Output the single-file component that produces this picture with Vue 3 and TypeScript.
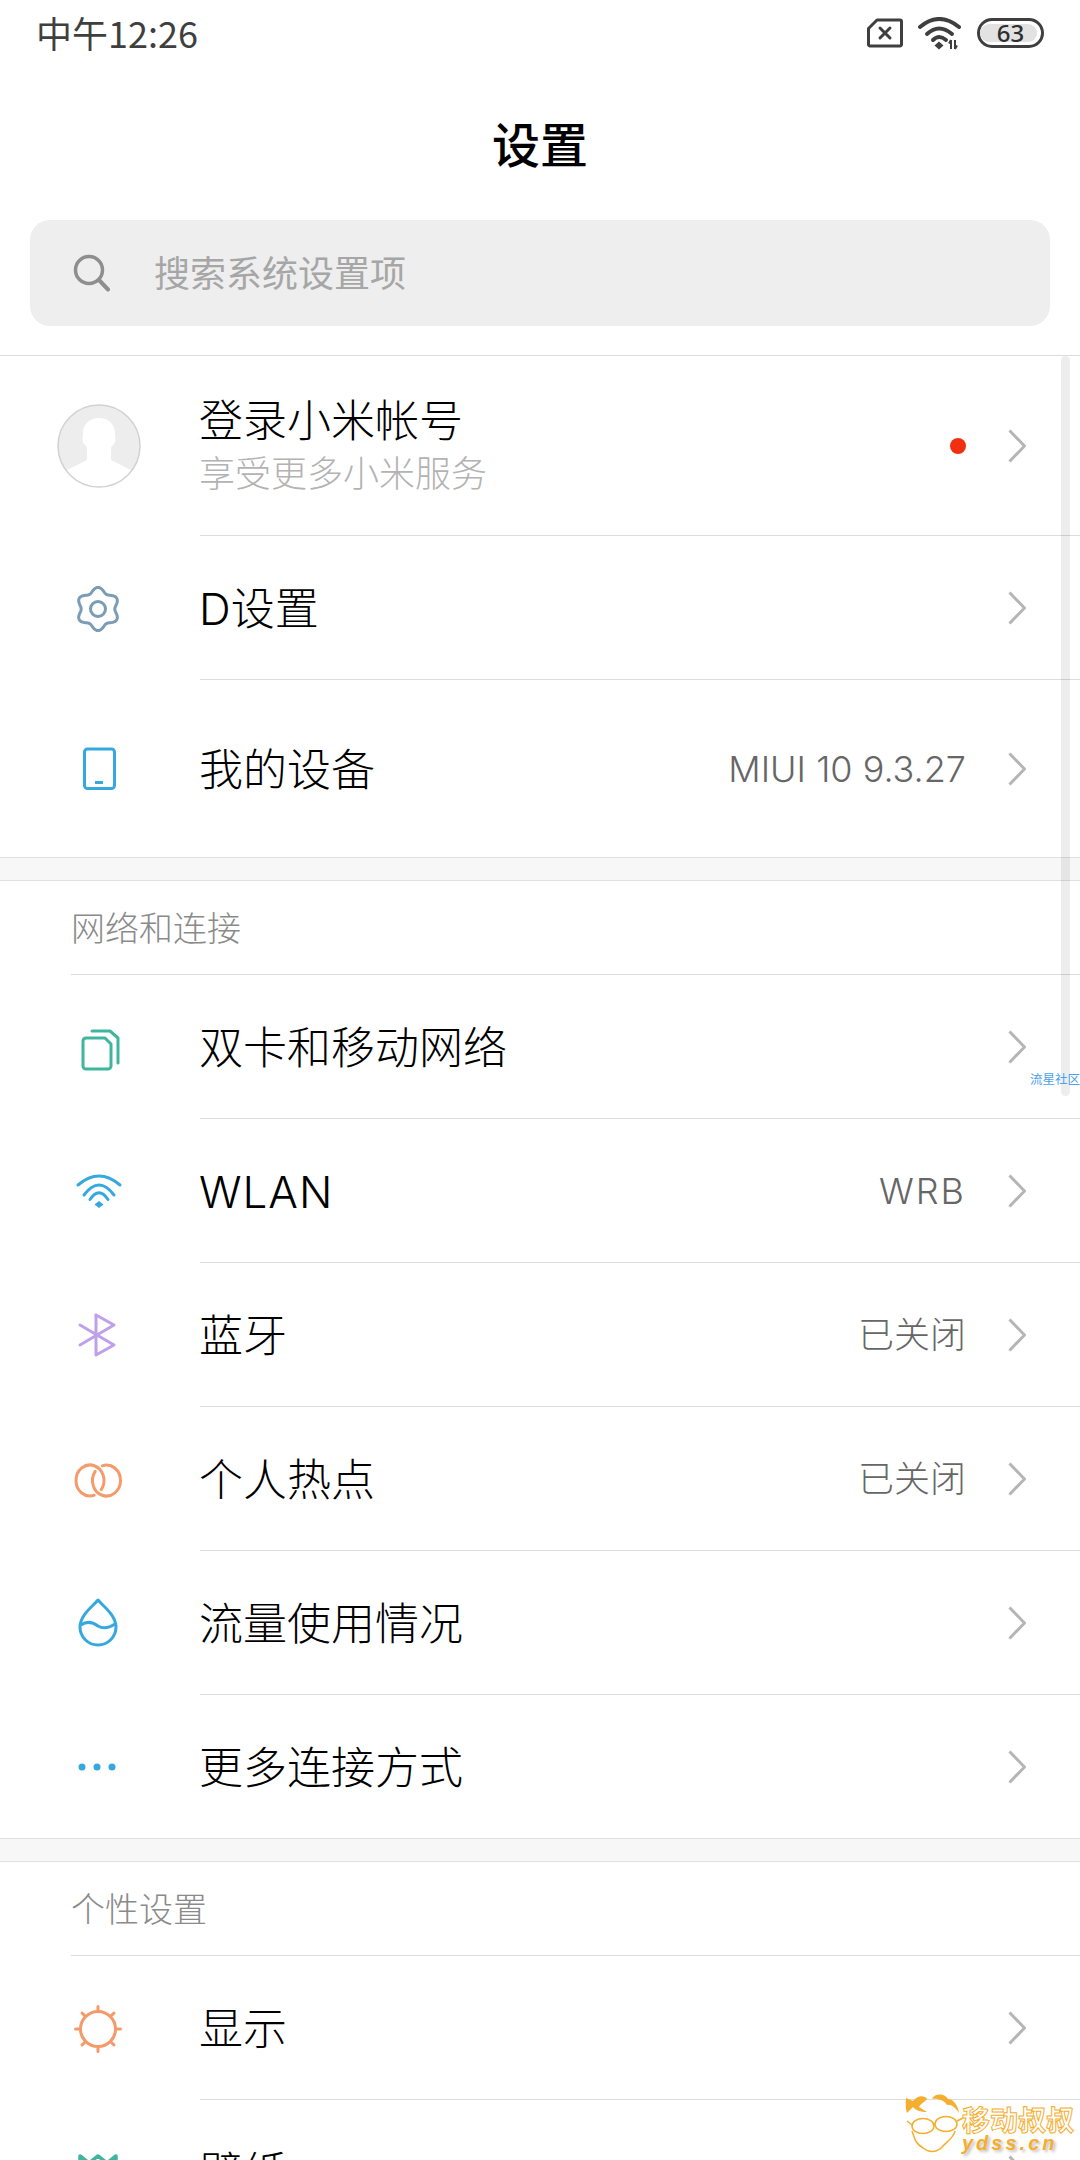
<template>
  <div class="page">
    <div class="status-bar">
      <span class="time">中午12:26</span>
      <div class="status-icons">
        <svg width="36" height="30" viewBox="0 0 36 30" class="st-icon">
          <path d="M10 2H33a1.500 1.500 0 0 1 1.500 1.500V26.500A1.500 1.500 0 0 1 33 28H3a1.500 1.500 0 0 1-1.500-1.500V10.500Z" fill="none" stroke="#3f3f3f" stroke-width="3" stroke-linejoin="round"/>
          <path d="M13 10L23 20M23 10L13 20" stroke="#3f3f3f" stroke-width="3" stroke-linecap="round"/>
        </svg>
        <svg width="44" height="33" viewBox="0 0 44 33" class="st-icon">
          <path d="M2 10Q21-6 41 10" fill="none" stroke="#3f3f3f" stroke-width="4" stroke-linecap="round"/>
          <path d="M9 17Q21 6 34 17" fill="none" stroke="#3f3f3f" stroke-width="4" stroke-linecap="round"/>
          <path d="M15 23Q21 17 28 23" fill="none" stroke="#3f3f3f" stroke-width="4" stroke-linecap="round"/>
          <path d="M21 24.500L25.500 28.500L21 32.500L16.500 28.500Z" fill="#3f3f3f"/>
          <path d="M33 23V32M31 26.500L33 23M37 23V32M39 28.500L37 32" fill="none" stroke="#3f3f3f" stroke-width="2"/>
        </svg>
        <div class="battery">
          <div class="battery-fill"></div>
          <span class="battery-num">63</span>
        </div>
      </div>
    </div>

    <div class="title-bar">设置</div>

    <div class="search">
      <svg width="38" height="38" viewBox="0 0 38 38">
        <circle cx="16" cy="16" r="13.500" fill="none" stroke="#8e8e8e" stroke-width="3.500"/>
        <path d="M26 26L35 35.500" stroke="#8e8e8e" stroke-width="4" stroke-linecap="round"/>
      </svg>
      <span class="search-text">搜索系统设置项</span>
    </div>

    <div class="list">
      <template v-for="(section, si) in sections" :key="si">
        <div v-if="si > 0" class="band"></div>
        <div v-if="section.header" class="section-header"><span>{{ section.header }}</span></div>
        <div
          v-for="row in section.rows"
          :key="row.title"
          class="row"
          :class="[row.size, { last: row.last, wide: row.wide }]"
        >
          <div class="icon-cell">
            <svg v-if="row.icon === 'avatar'" class="avatar" width="84" height="84" viewBox="0 0 84 84">
              <defs>
                <clipPath id="avatar-clip"><circle cx="42" cy="42" r="41"/></clipPath>
              </defs>
              <circle cx="42" cy="42" r="41" fill="#ededed"/>
              <g clip-path="url(#avatar-clip)">
                <path d="M42 14C32 14 26 21 26 29C26 33 25 35 26 38C27 41 29 41 30 44V54C30 56 29 57 26 58L8 67L8 90H76V67L58 58C55 57 54 56 54 54V44C55 41 57 41 58 38C59 35 58 33 58 29C58 21 52 14 42 14Z" fill="#fff"/>
              </g>
              <circle cx="42" cy="42" r="41" fill="none" stroke="#d2d2d2" stroke-width="1.500"/>
            </svg>
            <svg v-else class="icon" width="60" height="60" viewBox="-30 -30 60 60">
              <g v-if="row.icon === 'gear'" fill="none" stroke="#7b9cb5" stroke-width="3">
                <path :d="gearPath"/>
                <circle cx="0" cy="1" r="7.500"/>
              </g>
              <g v-else-if="row.icon === 'device'" fill="none" stroke="#36a8e0" stroke-width="3">
                <rect x="-13.500" y="-20" width="30" height="39.500" rx="3"/>
                <path d="M-3 13.500H5"/>
              </g>
              <g v-else-if="row.icon === 'sim'" fill="none" stroke="#3fb59e" stroke-width="3" stroke-linecap="round" stroke-linejoin="round">
                <path d="M-12-9H7L13-3V19A3 3 0 0 1 10 22H-12A3 3 0 0 1-15 19V-6A3 3 0 0 1-12-9Z"/>
                <path d="M-6-16H12L20-9V16"/>
              </g>
              <g v-else-if="row.icon === 'wifi'" fill="none" stroke="#36a8e0" stroke-width="3" stroke-linecap="round">
                <path d="M-20-6Q1-24 22-6"/>
                <path d="M-14 4Q1-16 16 4"/>
                <path d="M-8 8.500Q1-5 10 8.500"/>
                <path d="M1 10L5.500 13.500L1 17L-3.500 13.500Z" fill="#36a8e0" stroke="none"/>
              </g>
              <g v-else-if="row.icon === 'bluetooth'" fill="none" stroke="#bfa0ea" stroke-width="3" stroke-linejoin="round" stroke-linecap="round">
                <path d="M-2-20V20L16 10L-18-10"/>
                <path d="M-18 10L16-10L-2-20"/>
              </g>
              <g v-else-if="row.icon === 'hotspot'" fill="none" stroke="#f59a6b" stroke-width="3" stroke-linecap="round">
                <path d="M4.200-13.200A14 15.500 0 1 1-2.800-7.600"/>
                <path d="M3.300 10.600A14 15.500 0 1 0-3.700 16.200"/>
              </g>
              <g v-else-if="row.icon === 'drop'" fill="none" stroke="#36a8e0" stroke-width="3">
                <path d="M0-23C-5-17-18-8-18 4A18 18 0 0 0 18 4C18-8 5-17 0-23Z" stroke-linejoin="round"/>
                <path d="M-17 2C-10-3-4 0 0 3C5 6 11 5 17 1"/>
              </g>
              <g v-else-if="row.icon === 'dots'" fill="#36a8e0">
                <circle cx="-16" cy="0" r="3.500"/>
                <circle cx="-1" cy="0" r="3.500"/>
                <circle cx="14" cy="0" r="3.500"/>
              </g>
              <g v-else-if="row.icon === 'sun'" fill="none" stroke="#f59a6b" stroke-width="3">
                <circle cx="0" cy="1" r="17.500"/>
                <path :d="sunRays" stroke-linecap="round"/>
              </g>
              <g v-else-if="row.icon === 'wallpaper'" fill="none" stroke="#3fb59e" stroke-width="3.500" stroke-linejoin="round">
                <path d="M-18-16L-9-9L0-16L9-9L18-16V18H-18Z"/>
              </g>
            </svg>
          </div>
          <div class="row-body">
            <div class="row-text">
              <div class="row-title">{{ row.title }}</div>
              <div v-if="row.sub" class="row-sub">{{ row.sub }}</div>
            </div>
            <span v-if="row.value" class="row-value" :class="{ latin: /[A-Z]/.test(row.value) }">{{ row.value }}</span>
            <span v-if="row.dot" class="red-dot"></span>
            <svg class="chevron" width="18" height="34" viewBox="0 0 18 34">
              <path d="M1.500 1.500L16.500 17L1.500 32.500" fill="none" stroke="#b5b5b5" stroke-width="3"/>
            </svg>
          </div>
        </div>
      </template>
    </div>

    <div class="scrollbar"></div>
    <div class="mark-small">流星社区</div>

    <div class="mark-big">
      <svg width="60" height="62" viewBox="0 0 60 62">
        <path d="M2 20C0 14 1 8 1 5L8 8C12 2 20 2 22 6C20 9 16 10 14 14L22 19C16 19 10 17 8 14C6 16 4 18 2 20Z" fill="#f5ae2d"/>
        <path d="M27 6C30 -1 41 1 43 6C48 6 53 12 54 20C50 14 46 11 42 12C40 8 33 5 27 6Z" fill="#f5ae2d"/>
        <g fill="none" stroke="#f5ae2d" stroke-width="1.500">
          <ellipse cx="18" cy="33" rx="11" ry="7.500"/>
          <ellipse cx="41" cy="31" rx="11" ry="7.500"/>
          <path d="M29 31L30 31M52 28L58 25M7 32L2 28"/>
          <path d="M7 38C10 46 10 50 18 55C24 60 32 60 38 53C44 47 49 44 50 38"/>
        </g>
      </svg>
      <div class="mark-text">
        <div class="mark-cn">移动叔叔</div>
        <div class="mark-en">ydss.cn</div>
      </div>
    </div>
  </div>
</template>

<script setup lang="ts">
interface Row {
  icon: string;
  title: string;
  sub?: string;
  value?: string;
  dot?: boolean;
  size?: string;
  last?: boolean;
  wide?: boolean;
}

interface Section {
  header?: string;
  rows: Row[];
}

const sections: Section[] = [
  {
    rows: [
      { icon: 'avatar', title: '登录小米帐号', sub: '享受更多小米服务', dot: true, size: 'account' },
      { icon: 'gear', title: 'D设置' },
      { icon: 'device', title: '我的设备', value: 'MIUI 10 9.3.27', size: 'tall', last: true },
    ],
  },
  {
    header: '网络和连接',
    rows: [
      { icon: 'sim', title: '双卡和移动网络' },
      { icon: 'wifi', title: 'WLAN', value: 'WRB', wide: true },
      { icon: 'bluetooth', title: '蓝牙', value: '已关闭' },
      { icon: 'hotspot', title: '个人热点', value: '已关闭' },
      { icon: 'drop', title: '流量使用情况' },
      { icon: 'dots', title: '更多连接方式', size: 'short', last: true },
    ],
  },
  {
    header: '个性设置',
    rows: [
      { icon: 'sun', title: '显示' },
      { icon: 'wallpaper', title: '壁纸' },
    ],
  },
];

// gear outline: six soft lobes around the centre
const gearPath = (() => {
  const pts: string[] = [];
  for (let i = 0; i < 120; i++) {
    const a = (i / 120) * Math.PI * 2;
    const r = 19.2 + 2.4 * Math.cos(6 * (a + Math.PI / 2));
    pts.push(`${(r * Math.cos(a)).toFixed(2)} ${(1 + r * Math.sin(a)).toFixed(2)}`);
  }
  return 'M' + pts.join('L') + 'Z';
})();

const sunRays = (() => {
  let d = '';
  for (let i = 0; i < 8; i++) {
    const a = (i / 8) * Math.PI * 2;
    const c = Math.cos(a);
    const s = Math.sin(a);
    d += `M${(19 * c).toFixed(2)} ${(1 + 19 * s).toFixed(2)}L${(22.5 * c).toFixed(2)} ${(1 + 22.5 * s).toFixed(2)}`;
  }
  return d;
})();
</script>

<style scoped>
.page {
  position: relative;
  width: 1080px;
  height: 2160px;
  overflow: hidden;
  background: #fff;
  color: #000;
  font-family: Inter, "Noto Sans CJK SC", "Noto Sans", sans-serif;
  font-weight: 300;
}

.status-bar {
  height: 72px;
  padding: 0 36px;
  display: flex;
  justify-content: space-between;
  align-items: center;
}

.time {
  font-family: "Noto Sans CJK SC", "Noto Sans", sans-serif;
  font-size: 36px;
  color: #3f3f3f;
  font-weight: 400;
  padding-bottom: 8px;
}

.status-icons {
  display: flex;
  align-items: center;
  gap: 15px;
  padding-bottom: 6px;
}

.battery {
  position: relative;
  width: 67px;
  height: 30px;
  box-sizing: border-box;
  border: 3px solid #3f3f3f;
  border-radius: 15px;
  display: flex;
  justify-content: center;
  align-items: center;
}

.battery-fill {
  position: absolute;
  left: 0;
  top: 3px;
  bottom: 3px;
  right: 4px;
  border-radius: 10px;
  background: #e2e2e2;
}

.battery-num {
  position: relative;
  font-size: 24px;
  line-height: 24px;
  font-family: "Noto Sans", sans-serif;
  color: #2f2f2f;
  font-weight: 500;
}

.title-bar {
  height: 148px;
  line-height: 140px;
  text-align: center;
  font-family: "Noto Sans CJK SC", sans-serif;
  font-size: 48px;
  font-weight: 500;
}

.search {
  height: 106px;
  margin: 0 30px 29px;
  padding-left: 43px;
  border-radius: 20px;
  background: #eee;
  display: flex;
  align-items: center;
  gap: 43px;
}

.search-text {
  font-size: 36px;
  color: #a6a6a6;
  font-weight: 400;
  padding-bottom: 5px;
}

.list {
  border-top: 1px solid #dcdcdc;
}

.band {
  height: 24px;
  box-sizing: border-box;
  background: #f7f7f7;
  border-top: 1px solid #e0e0e0;
  border-bottom: 1px solid #e0e0e0;
}

.section-header {
  height: 94px;
  box-sizing: border-box;
  margin-left: 71px;
  border-bottom: 1px solid #dcdcdc;
  display: flex;
  align-items: center;
  font-size: 34px;
  color: #8a8a8a;
  padding-bottom: 3px;
}

.row {
  height: 144px;
  display: flex;
}

.row.account {
  height: 180px;
}

.row.tall {
  height: 177px;
}

.row.short {
  height: 143px;
}

.icon-cell {
  width: 196px;
  padding-right: 4px;
  display: flex;
  align-items: center;
  justify-content: center;
  flex: none;
}

.avatar {
  margin-left: 2px;
}

.row-body {
  flex: 1;
  min-width: 0;
  box-sizing: border-box;
  padding-right: 54px;
  border-bottom: 1px solid #dcdcdc;
  display: flex;
  align-items: center;
}

.row.last .row-body {
  border-bottom: none;
}

.row-text {
  flex: 1;
  margin-left: -1px;
  padding-top: 3px;
}

.row-title {
  font-size: 44px;
  line-height: 54px;
}

.row.wide .row-title {
  letter-spacing: 1px;
}

.row-sub {
  font-size: 36px;
  line-height: 52px;
  color: #b3b3b3;
}

.row-value {
  font-size: 36px;
  color: #666;
  padding-bottom: 5px;
}

.row-value.latin {
  padding-bottom: 0;
}

.row.wide .row-value {
  letter-spacing: 2px;
}

.red-dot {
  width: 16px;
  height: 16px;
  border-radius: 50%;
  background: #f03010;
}

.chevron {
  margin-left: 42px;
  flex: none;
}

.scrollbar {
  position: absolute;
  left: 1061px;
  top: 356px;
  width: 9px;
  height: 740px;
  border-radius: 5px;
  background: rgba(0, 0, 0, 0.07);
}

.mark-small {
  position: absolute;
  left: 1030px;
  top: 1073px;
  font-size: 12.5px;
  line-height: 14px;
  color: #4a9ff0;
  white-space: nowrap;
  font-weight: 400;
}

.mark-big {
  position: absolute;
  left: 905px;
  top: 2093px;
  display: flex;
  margin-left: 0;
}

.mark-text {
  width: 112px;
  margin-left: -3px;
  padding-top: 10px;
}

.mark-cn {
  font-family: "Noto Sans CJK SC", sans-serif;
  font-size: 28px;
  line-height: 32px;
  font-weight: 700;
  color: #fff;
  -webkit-text-stroke: 1px #f5ae2d;
  white-space: nowrap;
}

.mark-en {
  font-family: "Liberation Sans", sans-serif;
  font-size: 20px;
  line-height: 16px;
  font-style: italic;
  font-weight: 700;
  letter-spacing: 3px;
  color: #f5ae2d;
  text-shadow: 2px 2px 3px rgba(0, 0, 0, 0.25);
}
</style>
